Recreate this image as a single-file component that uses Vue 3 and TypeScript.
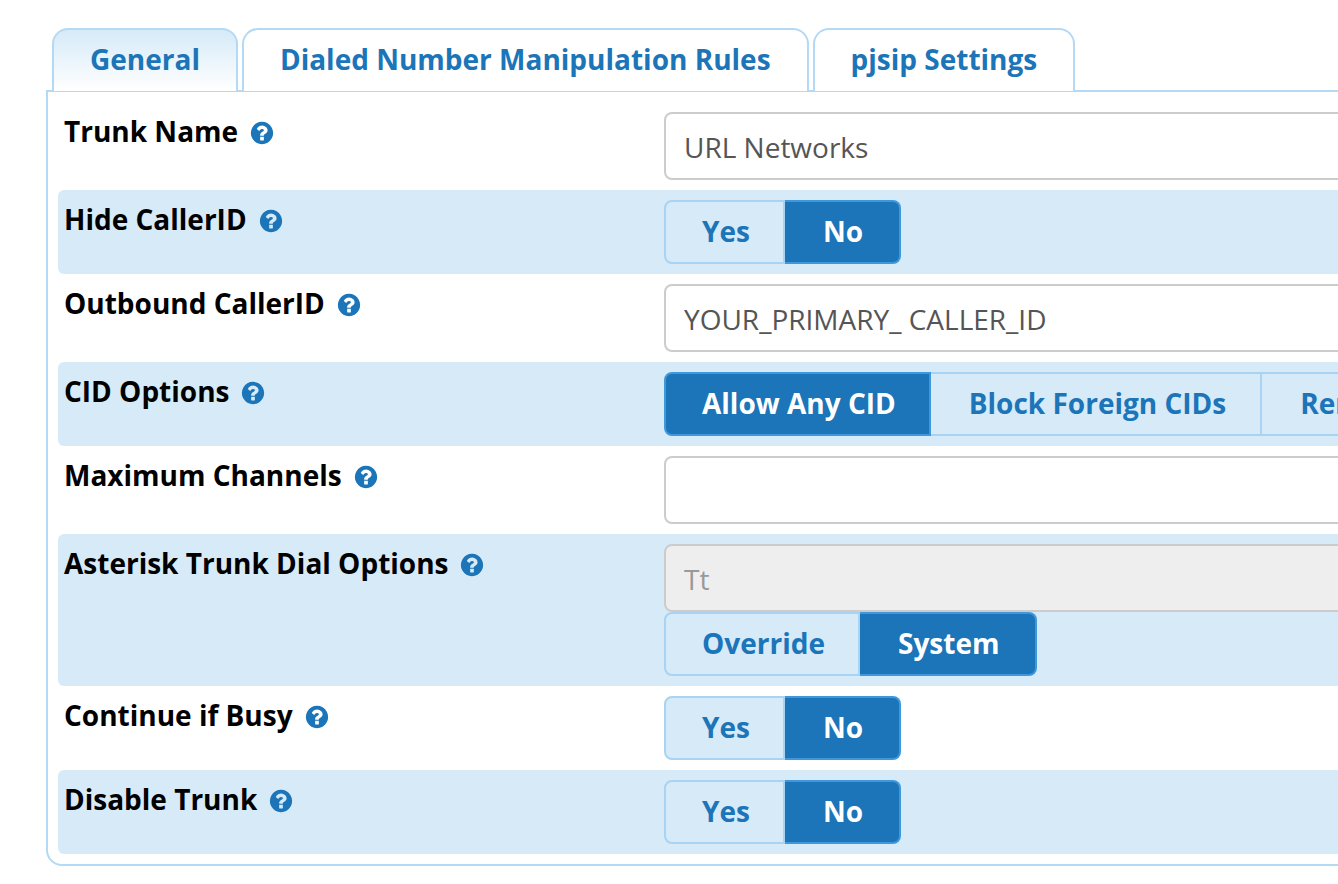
<template>
  <div class="page">
    <ul class="tabs">
      <li
        v-for="tab in tabs"
        :key="tab"
        class="tab"
        :class="{ active: tab === activeTab }"
        @click="activeTab = tab"
      >
        {{ tab }}
      </li>
    </ul>

    <div class="panel">
      <div v-for="row in rows" :key="row.label" class="row">
        <div class="label">
          <span>{{ row.label }}</span>
          <svg class="help" viewBox="0 0 1792 1792" aria-hidden="true">
            <path
              d="M1024 1376v-192q0-14-9-23t-23-9h-192q-14 0-23 9t-9 23v192q0 14 9 23t23 9h192q14 0 23-9t9-23zm256-672q0-88-55.5-163t-138.5-116-170-41q-243 0-371 213-15 24 8 42l132 100q7 6 19 6 16 0 25-12 53-68 86-92 34-24 86-24 48 0 85.5 26t37.5 59q0 38-20 61t-68 45q-63 28-115.5 86.5t-52.5 125.5v36q0 14 9 23t23 9h192q14 0 23-9t9-23q0-19 21.5-49.5t54.5-49.5q32-18 49-28.5t46-35 44.5-48 28-60.5 12.5-81zm384 192q0 209-103 385.5t-279.5 279.5-385.5 103-385.5-103-279.5-279.5-103-385.5 103-385.5 279.5-279.5 385.5-103 385.5 103 279.5 279.5 103 385.5z"
              fill="currentColor"
            />
          </svg>
        </div>
        <div class="control">
          <input
            v-if="row.input !== undefined"
            class="text-input"
            type="text"
            :value="row.input"
            :disabled="row.disabled"
          />
          <div v-if="row.options" class="toggle">
            <button
              v-for="opt in row.options"
              :key="opt"
              class="toggle-btn"
              :class="{ on: opt === row.selected }"
              type="button"
            >
              {{ opt }}
            </button>
          </div>
        </div>
      </div>
    </div>
  </div>
</template>

<script setup lang="ts">
import { ref } from 'vue'

interface Row {
  label: string
  input?: string
  disabled?: boolean
  options?: string[]
  selected?: string
}

const tabs = ['General', 'Dialed Number Manipulation Rules', 'pjsip Settings']
const activeTab = ref('General')

const yesNo = ['Yes', 'No']

const rows: Row[] = [
  { label: 'Trunk Name', input: 'URL Networks' },
  { label: 'Hide CallerID', options: yesNo, selected: 'No' },
  { label: 'Outbound CallerID', input: 'YOUR_PRIMARY_ CALLER_ID' },
  {
    label: 'CID Options',
    options: ['Allow Any CID', 'Block Foreign CIDs', 'Remove Foreign CIDs', 'Force Trunk CID'],
    selected: 'Allow Any CID',
  },
  { label: 'Maximum Channels', input: '' },
  {
    label: 'Asterisk Trunk Dial Options',
    input: 'Tt',
    disabled: true,
    options: ['Override', 'System'],
    selected: 'System',
  },
  { label: 'Continue if Busy', options: yesNo, selected: 'No' },
  { label: 'Disable Trunk', options: yesNo, selected: 'No' },
]
</script>

<style>
html,
body {
  margin: 0;
  background: #fff;
  overflow: hidden;
}
</style>

<style scoped>
.page {
  width: 1338px;
  height: 884px;
  overflow: hidden;
  padding: 28px 0 0 46px;
  box-sizing: border-box;
  font-family: 'Open Sans', 'Noto Sans', sans-serif;
}

.tabs {
  display: flex;
  gap: 4px;
  margin: 0 0 -1px 6px;
  padding: 0;
  list-style: none;
  position: relative;
  z-index: 1;
}

.tab {
  height: 63px;
  box-sizing: border-box;
  padding: 0 36px 4px;
  display: flex;
  align-items: center;
  border: 2px solid #b3d9f4;
  border-bottom: 0;
  border-radius: 16px 16px 0 0;
  background: #fff;
  color: #1b75b8;
  font-size: 28px;
  font-weight: 700;
  white-space: nowrap;
}

.tab.active {
  background: linear-gradient(180deg, #d6eaf8 0%, #fff 100%);
}

.panel {
  width: 1500px;
  box-sizing: border-box;
  padding: 10px;
  border: 2px solid #b3d9f4;
  border-radius: 0 16px 16px 16px;
}

.row {
  display: flex;
  padding: 10px 6px;
  border-radius: 6px;
}

.row:nth-child(even) {
  background: #d6eaf8;
}

.label {
  width: 600px;
  flex: none;
  display: flex;
  align-items: center;
  align-self: flex-start;
  gap: 11px;
  height: 38px;
  color: #000;
  font-size: 28px;
  font-weight: 700;
  white-space: nowrap;
}

.help {
  width: 26px;
  height: 26px;
  flex: none;
  margin-top: 3px;
  color: #1b75b8;
}

.control {
  flex: 1;
  display: flex;
  flex-direction: column;
}

.text-input {
  width: 100%;
  height: 68px;
  box-sizing: border-box;
  padding: 2px 18px 0;
  border: 2px solid #ccc;
  border-radius: 8px;
  background: #fff;
  color: #555;
  font-family: inherit;
  font-size: 28px;
  outline: none;
}

.text-input:disabled {
  background: #eee;
  color: #999;
  -webkit-text-fill-color: #999;
}

.toggle {
  display: flex;
}

.toggle-btn {
  height: 64px;
  padding: 0 34px 2px 38px;
  border: 2px solid #a9d3f2;
  border-left-width: 0;
  background: #d6eaf8;
  color: #1b75b8;
  font-family: inherit;
  font-size: 28px;
  font-weight: 700;
  white-space: nowrap;
}

.toggle-btn:first-child {
  padding: 0 33px 2px 36px;
  border-left-width: 2px;
  border-radius: 8px 0 0 8px;
}

.toggle-btn:last-child {
  padding-right: 36px;
  border-radius: 0 8px 8px 0;
}

.toggle-btn.on {
  background: #1b75b8;
  border-color: #3f97dc;
  color: #fff;
}
</style>
